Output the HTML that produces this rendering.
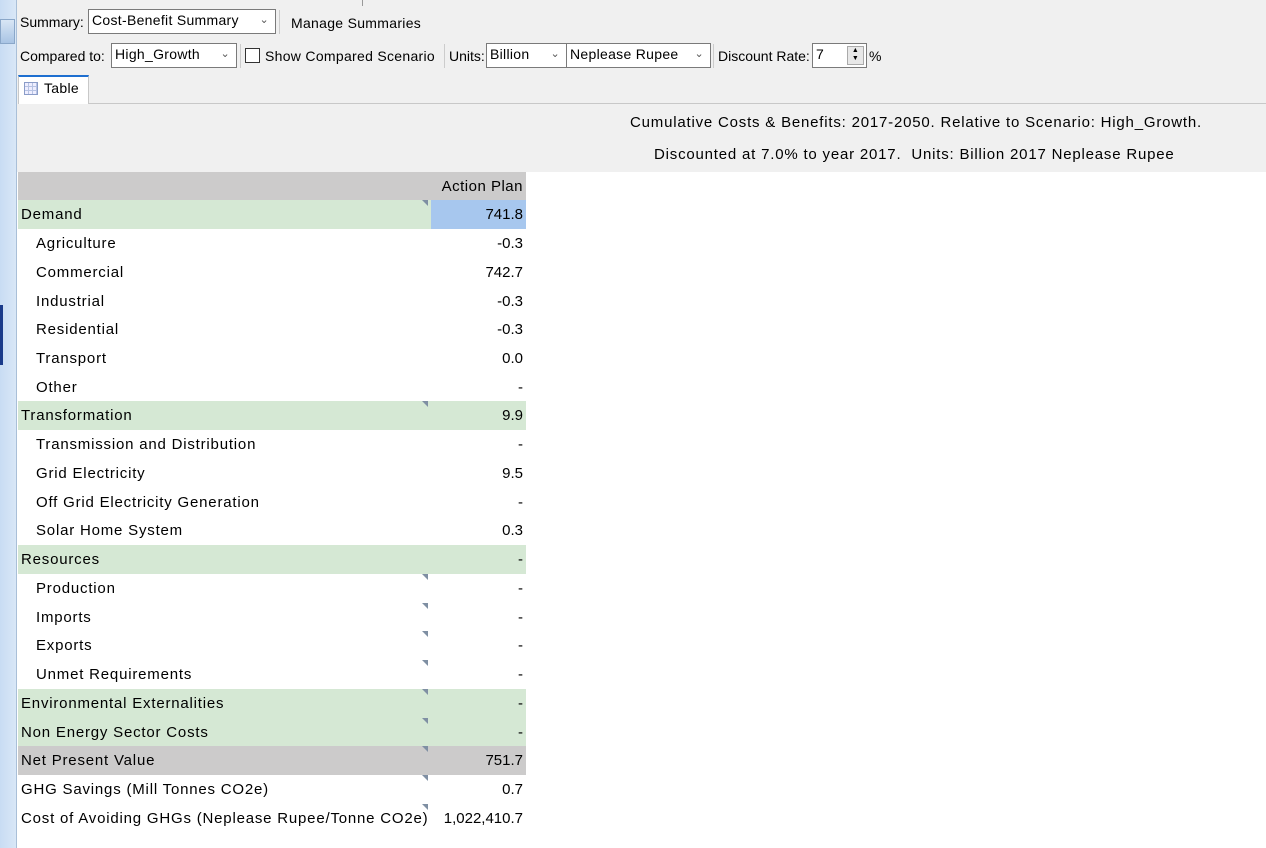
<!DOCTYPE html>
<html><head><meta charset="utf-8"><style>
*{margin:0;padding:0;box-sizing:border-box}
body{width:1266px;height:848px;overflow:hidden;background:#fff;font-family:"Liberation Sans",sans-serif;font-size:14px;letter-spacing:0.3px;color:#000;position:relative}
.a{position:absolute;white-space:nowrap}
.sel{position:absolute;background:#fff;border:1px solid #7a7a7a;height:25px;padding:2px 3px;font-size:14px}
.sel .ar{position:absolute;right:6px;top:3px;color:#555;font-size:11px}
.sep{position:absolute;width:1px;height:24px;background:#ccc}
.row{position:absolute;left:18px;width:508px;height:29px;line-height:29px;font-size:15px}
.row .v{position:absolute;right:3px;top:0;letter-spacing:0}
.row .l{position:absolute;left:3px;top:0;letter-spacing:0.8px}
.row .l.i{left:18px}
.g{background:#d5e8d4}
.gr{background:#cccbcb}
.tri{position:absolute;left:404px;top:0;width:0;height:0;border-top:6px solid #7f8fa3;border-left:6px solid transparent}
.hd{font-size:15px;letter-spacing:0.8px}
</style></head><body>
<div class="a" style="left:0;top:0;width:1266px;height:172px;background:#f0f0f0"></div>
<div class="a" style="left:0;top:0;width:17px;height:848px;background:linear-gradient(90deg,#c8dcf3,#d9e7f7);border-right:1px solid #a9bfd8"></div>
<div class="a" style="left:0;top:19px;width:15px;height:25px;background:linear-gradient(#d8e6f5,#a9c4e4);border:1px solid #8aa7c9"></div>
<div class="a" style="left:0;top:305px;width:3px;height:60px;background:#1a3a8a"></div>
<div class="a" style="left:362px;top:0;width:1px;height:6px;background:#999"></div>

<div class="a" style="left:20px;top:14px;letter-spacing:0">Summary:</div>
<div class="sel" style="left:88px;top:9px;width:188px">Cost-Benefit Summary<span class="ar">&#8964;</span></div>
<div class="sep" style="left:279px;top:10px"></div>
<div class="a" style="left:291px;top:15px">Manage Summaries</div>

<div class="a" style="left:20px;top:48px;letter-spacing:0">Compared to:</div>
<div class="sel" style="left:111px;top:43px;width:126px">High_Growth<span class="ar">&#8964;</span></div>
<div class="sep" style="left:240px;top:44px"></div>
<div class="a" style="left:245px;top:48px;width:15px;height:15px;border:1px solid #333;background:#fff"></div>
<div class="a" style="left:265px;top:48px">Show Compared Scenario</div>
<div class="sep" style="left:444px;top:44px"></div>
<div class="a" style="left:449px;top:48px;letter-spacing:0">Units:</div>
<div class="sel" style="left:486px;top:43px;width:81px">Billion<span class="ar">&#8964;</span></div>
<div class="sel" style="left:566px;top:43px;width:145px">Neplease Rupee<span class="ar">&#8964;</span></div>
<div class="sep" style="left:713px;top:44px"></div>
<div class="a" style="left:718px;top:48px;letter-spacing:0">Discount Rate:</div>
<div class="sel" style="left:812px;top:43px;width:55px">7<span style="position:absolute;right:2px;top:2px;width:17px;height:19px;background:#e8e8e8;border:1px solid #aaa;font-size:7px;line-height:8px;text-align:center">▲<br>▼</span></div>
<div class="a" style="left:869px;top:48px">%</div>

<div class="a" style="left:18px;top:103px;width:1248px;height:1px;background:#c8c8c8"></div>
<div class="a" style="left:18px;top:75px;width:71px;height:29px;background:#fff;border:1px solid #c8c8c8;border-bottom:none;border-top:2px solid #1e6fd0"></div>
<div class="a" style="left:24px;top:82px;width:14px;height:13px;border:1px solid #8a9cc8;background:repeating-linear-gradient(90deg,transparent 0 3px,#b7c3e3 3px 4px),repeating-linear-gradient(0deg,#eef 0 3px,#b7c3e3 3px 4px)"></div>
<div class="a" style="left:44px;top:80px;font-size:14px">Table</div>

<div class="a hd" style="left:630px;top:114px">Cumulative Costs &amp; Benefits: 2017-2050. Relative to Scenario: High_Growth.</div>
<div class="a hd" style="left:654px;top:146px">Discounted at 7.0% to year 2017.&nbsp; Units: Billion 2017 Neplease Rupee</div>

<div class="row gr" style="top:172px"><span class="v" style="letter-spacing:0.5px">Action Plan</span></div>
<div class="row g" style="top:200px"><span class="l">Demand</span><span class="v" style="right:0;left:413px;background:#a7c7ee;text-align:right;padding-right:3px">741.8</span><div class="tri"></div></div>
<div class="row" style="top:229px"><span class="l i">Agriculture</span><span class="v">-0.3</span></div>
<div class="row" style="top:258px"><span class="l i">Commercial</span><span class="v">742.7</span></div>
<div class="row" style="top:287px"><span class="l i">Industrial</span><span class="v">-0.3</span></div>
<div class="row" style="top:315px"><span class="l i">Residential</span><span class="v">-0.3</span></div>
<div class="row" style="top:344px"><span class="l i">Transport</span><span class="v">0.0</span></div>
<div class="row" style="top:373px"><span class="l i">Other</span><span class="v">-</span></div>
<div class="row g" style="top:401px"><span class="l">Transformation</span><span class="v">9.9</span><div class="tri"></div></div>
<div class="row" style="top:430px"><span class="l i">Transmission and Distribution</span><span class="v">-</span></div>
<div class="row" style="top:459px"><span class="l i">Grid Electricity</span><span class="v">9.5</span></div>
<div class="row" style="top:488px"><span class="l i">Off Grid Electricity Generation</span><span class="v">-</span></div>
<div class="row" style="top:516px"><span class="l i">Solar Home System</span><span class="v">0.3</span></div>
<div class="row g" style="top:545px"><span class="l">Resources</span><span class="v">-</span></div>
<div class="row" style="top:574px"><span class="l i">Production</span><span class="v">-</span><div class="tri"></div></div>
<div class="row" style="top:603px"><span class="l i">Imports</span><span class="v">-</span><div class="tri"></div></div>
<div class="row" style="top:631px"><span class="l i">Exports</span><span class="v">-</span><div class="tri"></div></div>
<div class="row" style="top:660px"><span class="l i">Unmet Requirements</span><span class="v">-</span><div class="tri"></div></div>
<div class="row g" style="top:689px"><span class="l">Environmental Externalities</span><span class="v">-</span><div class="tri"></div></div>
<div class="row g" style="top:718px"><span class="l">Non Energy Sector Costs</span><span class="v">-</span><div class="tri"></div></div>
<div class="row gr" style="top:746px"><span class="l">Net Present Value</span><span class="v">751.7</span><div class="tri"></div></div>
<div class="row" style="top:775px"><span class="l">GHG Savings (Mill Tonnes CO2e)</span><span class="v">0.7</span><div class="tri"></div></div>
<div class="row" style="top:804px"><span class="l">Cost of Avoiding GHGs (Neplease Rupee/Tonne CO2e)</span><span class="v">1,022,410.7</span><div class="tri"></div></div>
</body></html>
